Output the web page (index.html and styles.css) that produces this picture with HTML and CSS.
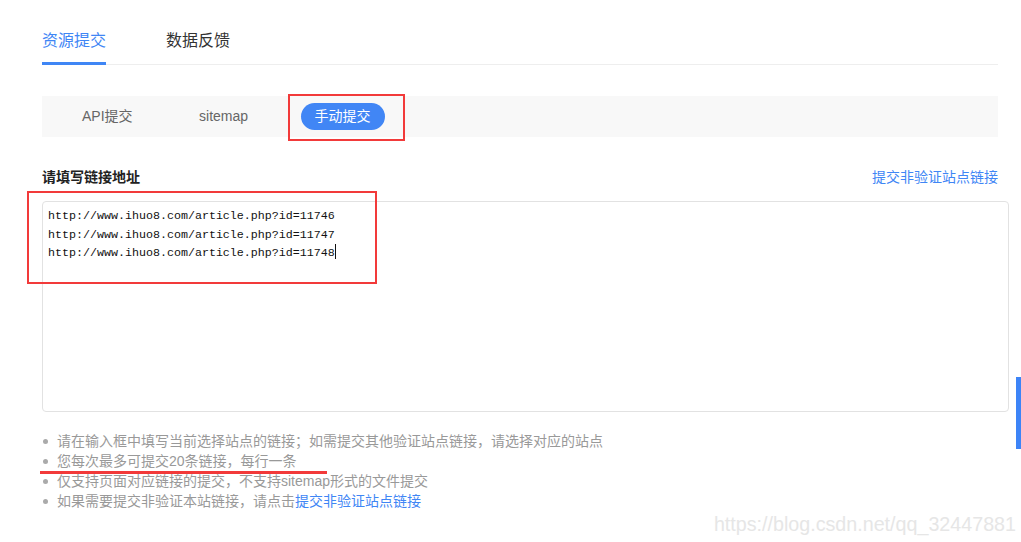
FILE: index.html
```html
<!DOCTYPE html>
<html lang="zh">
<head>
<meta charset="utf-8">
<title>资源提交</title>
<link rel="stylesheet" href="styles.css">
</head>
<body>
<div class="page">
  <div class="tabs">
    <div class="tab active">资源提交</div>
    <div class="tab">数据反馈</div>
  </div>

  <div class="subtabs">
    <div class="subtab">API提交</div>
    <div class="subtab">sitemap</div>
    <div class="subtab-wrap">
      <div class="subtab pill">手动提交</div>
      <div class="mark mark-pill"></div>
    </div>
  </div>

  <div class="label-row">
    <div class="label">请填写链接地址</div>
    <a class="link">提交非验证站点链接</a>
  </div>

  <div class="input-wrap">
    <div class="input">
      <div class="line">http://www.ihuo8.com/article.php?id=11746</div>
      <div class="line">http://www.ihuo8.com/article.php?id=11747</div>
      <div class="line">http://www.ihuo8.com/article.php?id=11748<span class="caret"></span></div>
    </div>
    <div class="mark mark-input"></div>
  </div>

  <ul class="tips">
    <li>请在输入框中填写当前选择站点的链接；如需提交其他验证站点链接，请选择对应的站点</li>
    <li class="underlined">您每次最多可提交20条链接，每行一条<span class="redline"></span></li>
    <li>仅支持页面对应链接的提交，不支持sitemap形式的文件提交</li>
    <li>如果需要提交非验证本站链接，请点击<a class="link">提交非验证站点链接</a></li>
  </ul>
</div>
<div class="watermark">https://blog.csdn.net/qq_32447881</div>
<div class="scrollbar"></div>
</body>
</html>
```

FILE: styles.css
```css
html, body {
  margin: 0;
  padding: 0;
  background: #fff;
  font-family: "Liberation Sans", "Noto Sans CJK SC", sans-serif;
  width: 1021px;
  height: 542px;
  overflow: hidden;
  position: relative;
}

.page {
  padding-left: 42px;
  width: 956px;
}

.tabs {
  display: flex;
  gap: 60px;
  padding-top: 30px;
  border-bottom: 1px solid #eeeeee;
}

.tab {
  font-size: 16px;
  line-height: 22px;
  color: #333;
  padding-bottom: 10px;
  border-bottom: 3px solid transparent;
  margin-bottom: -1px;
}

.tab.active {
  color: #3f86f5;
  border-bottom-color: #3f86f5;
}

.subtabs {
  margin-top: 31px;
  height: 41px;
  background: #f8f8f8;
  display: flex;
  align-items: center;
  gap: 38.5px;
  padding-left: 26px;
}

.subtab {
  font-size: 14px;
  color: #666;
  padding: 0 14px;
  line-height: 27px;
}

.subtab-wrap {
  position: relative;
}

.pill {
  background: #4186f5;
  color: #fff;
  border-radius: 14px;
  height: 27px;
}

.mark {
  position: absolute;
  border: 2px solid #f23a3a;
  box-sizing: border-box;
}

.mark-pill {
  left: -13px;
  top: -9px;
  width: 117px;
  height: 47px;
}

.label-row {
  margin-top: 29px;
  display: flex;
  justify-content: space-between;
  align-items: center;
  height: 20px;
}

.label {
  font-size: 14px;
  font-weight: bold;
  color: #222;
}

.link {
  font-size: 14px;
  color: #3f86f5;
  text-decoration: none;
}

.input-wrap {
  position: relative;
  margin-top: 15px;
  width: 967px;
}

.input {
  height: 211px;
  box-sizing: border-box;
  border: 1px solid #e2e2e2;
  border-radius: 4px;
  padding: 5px 5px;
  font-family: "Liberation Mono", "DejaVu Sans Mono", monospace;
  font-size: 11.67px;
  line-height: 18.5px;
  color: #111;
}

.caret {
  display: inline-block;
  width: 1px;
  height: 15px;
  background: #111;
  vertical-align: -3px;
}

.mark-input {
  left: -15px;
  top: -10px;
  width: 350px;
  height: 93px;
}

.tips {
  margin: 19px 0 0;
  padding: 0 0 0 15px;
  list-style: none;
  font-size: 14px;
  line-height: 20px;
  color: #999;
}

.tips li {
  position: relative;
}

.tips li::before {
  content: "";
  position: absolute;
  left: -14px;
  top: 8px;
  width: 5px;
  height: 5px;
  border-radius: 50%;
  background: #aaa;
}

.redline {
  position: absolute;
  left: -17px;
  top: 20px;
  width: 287px;
  height: 3px;
  background: #f23a3a;
}

.watermark {
  position: absolute;
  right: 5px;
  bottom: 6px;
  font-family: "Liberation Sans", Arial, sans-serif;
  font-size: 19.7px;
  color: #e6e6e6;
}

.scrollbar {
  position: absolute;
  left: 1016px;
  top: 377px;
  width: 5px;
  height: 72px;
  background: #3d84f7;
}
```
